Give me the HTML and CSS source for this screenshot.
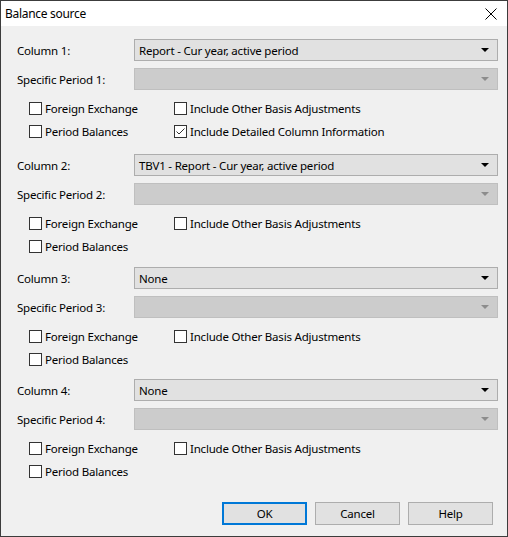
FILE: index.html
```html
<!DOCTYPE html>
<html>
<head>
<meta charset="utf-8">
<link rel="stylesheet" href="styles.css">
</head>
<body>
<div class="window">
  <div class="titlebar">
    <span class="title">Balance source</span>
    <svg class="close" width="12" height="12" viewBox="0 0 12 12"><path d="M0.5 0.5 L11.5 11.5 M11.5 0.5 L0.5 11.5" stroke="#000" stroke-width="1" fill="none"/></svg>
  </div>
  <div class="content">
    <div class="group g1">
      <div class="row"><span class="label">Column 1:</span><div class="combo"><span>Report - Cur year, active period</span><i class="arrow"></i></div></div>
      <div class="row"><span class="label">Specific Period 1:</span><div class="combo disabled"><span></span><i class="arrow"></i></div></div>
      <div class="checks">
        <label class="chk"><span class="box"></span>Foreign Exchange</label>
        <label class="chk"><span class="box"></span>Include Other Basis Adjustments</label>
        <label class="chk"><span class="box"></span>Period Balances</label>
        <label class="chk"><span class="box checked"><svg width="11" height="11" viewBox="0 0 11 11"><path d="M1.5 5.5 L4 8 L9.5 2.5" stroke="#333" stroke-width="1" fill="none"/></svg></span>Include Detailed Column Information</label>
      </div>
    </div>
    <div class="group g2">
      <div class="row"><span class="label">Column 2:</span><div class="combo"><span>TBV1 - Report - Cur year, active period</span><i class="arrow"></i></div></div>
      <div class="row"><span class="label">Specific Period 2:</span><div class="combo disabled"><span></span><i class="arrow"></i></div></div>
      <div class="checks">
        <label class="chk"><span class="box"></span>Foreign Exchange</label>
        <label class="chk"><span class="box"></span>Include Other Basis Adjustments</label>
        <label class="chk"><span class="box"></span>Period Balances</label>
      </div>
    </div>
    <div class="group g3">
      <div class="row"><span class="label">Column 3:</span><div class="combo"><span>None</span><i class="arrow"></i></div></div>
      <div class="row"><span class="label">Specific Period 3:</span><div class="combo disabled"><span></span><i class="arrow"></i></div></div>
      <div class="checks">
        <label class="chk"><span class="box"></span>Foreign Exchange</label>
        <label class="chk"><span class="box"></span>Include Other Basis Adjustments</label>
        <label class="chk"><span class="box"></span>Period Balances</label>
      </div>
    </div>
    <div class="group g4">
      <div class="row"><span class="label">Column 4:</span><div class="combo"><span>None</span><i class="arrow"></i></div></div>
      <div class="row"><span class="label">Specific Period 4:</span><div class="combo disabled"><span></span><i class="arrow"></i></div></div>
      <div class="checks">
        <label class="chk"><span class="box"></span>Foreign Exchange</label>
        <label class="chk"><span class="box"></span>Include Other Basis Adjustments</label>
        <label class="chk"><span class="box"></span>Period Balances</label>
      </div>
    </div>
    <div class="buttons">
      <button class="btn default">OK</button>
      <button class="btn">Cancel</button>
      <button class="btn">Help</button>
    </div>
  </div>
</div>
</body>
</html>
```
FILE: styles.css
```css
* { box-sizing: border-box; }
html, body { margin: 0; padding: 0; background: #fff; }
body {
  font-family: "Noto Sans", "Open Sans", sans-serif;
  font-size: 11.5px;
  letter-spacing: -0.2px;
  color: #000;
}
.window {
  width: 508px;
  height: 537px;
  border: 1px solid #3c3c3c;
  background: #f0f0f0;
  display: flex;
  flex-direction: column;
}
.titlebar {
  height: 25px;
  background: #fff;
  display: flex;
  align-items: center;
  justify-content: space-between;
  padding: 0 10px 0 4px;
  flex: none;
}
.title { font-size: 12px; letter-spacing: -0.3px; margin-top: -1px; }
.close { display: block; }
.content {
  padding: 13px 9px 0 16px;
}
.row {
  display: flex;
  align-items: center;
  height: 22px;
  margin-bottom: 7px;
}
.label {
  width: 117px;
  flex: none;
}
.combo {
  flex: 1;
  height: 22px;
  border: 1px solid #adadad;
  background: #e1e1e1;
  display: flex;
  align-items: center;
  justify-content: space-between;
  padding: 0 8px 0 4px;
}
.combo.disabled {
  background: #cccccc;
  border-color: #bfbfbf;
}
.arrow {
  width: 0;
  height: 0;
  border-left: 4px solid transparent;
  border-right: 4px solid transparent;
  border-top: 4px solid #000;
}
.combo.disabled .arrow { border-top-color: #8c8c8c; }
.checks {
  display: grid;
  grid-template-columns: 145px auto;
  grid-auto-rows: 23px;
  padding-left: 12px;
}
.chk {
  display: flex;
  align-items: center;
  gap: 3px;
}
.box {
  width: 13px;
  height: 13px;
  border: 1px solid #333;
  background: #fff;
  flex: none;
  display: flex;
  align-items: center;
  justify-content: center;
}
.box svg { display: block; }
.g1 { margin-bottom: 11px; }
.g2 { margin-bottom: 9px; }
.g3 { margin-bottom: 8px; }
.buttons {
  display: flex;
  justify-content: flex-end;
  gap: 8px;
  margin-top: 19px;
  padding-right: 5px;
}
.btn {
  width: 85px;
  height: 23px;
  border: 1px solid #adadad;
  background: #e1e1e1;
  font-family: inherit;
  font-size: 11.5px;
  letter-spacing: -0.2px;
  color: #000;
  padding: 0;
}
.btn.default {
  border: 2px solid #0078d7;
}
```
